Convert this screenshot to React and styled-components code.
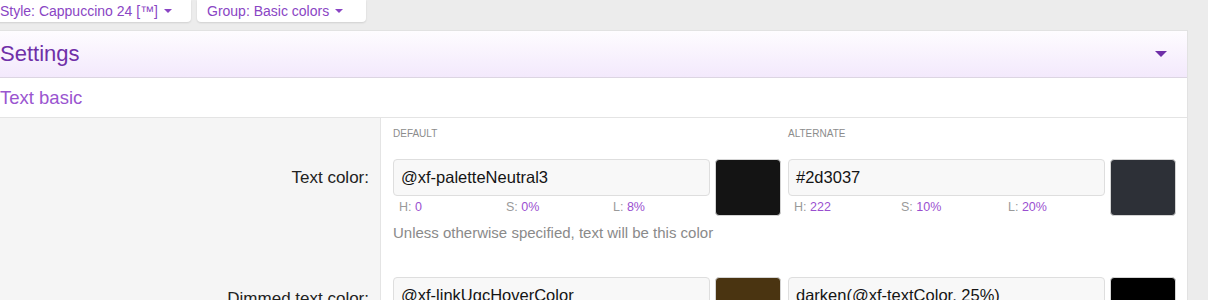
import React from 'react';
import styled, { createGlobalStyle } from 'styled-components';

const GlobalStyle = createGlobalStyle`
  html, body {
    margin: 0;
    padding: 0;
    background: #ececec;
    font-family: "Liberation Sans", Arial, sans-serif;
    overflow: hidden;
  }
`;

const Page = styled.div`
  margin-left: -10px;
  width: 1197px;
`;

const Toolbar = styled.div`
  display: flex;
  gap: 6px;
  height: 22px;
  margin-bottom: 9px;
`;

const MenuButton = styled.button`
  display: flex;
  align-items: center;
  gap: 6px;
  height: 22px;
  padding: 0 14px 0 10px;
  border: none;
  border-radius: 0 0 4px 4px;
  background: #fff;
  box-shadow: 0 1px 2px rgba(0, 0, 0, 0.12);
  color: #8a45c4;
  font-family: inherit;
  font-size: 14px;
  width: ${p => p.$width}px;
`;

const Caret = styled.span`
  width: 0;
  height: 0;
  border-left: ${p => p.$size}px solid transparent;
  border-right: ${p => p.$size}px solid transparent;
  border-top: ${p => p.$size}px solid ${p => p.$color};
`;

const Block = styled.div`
  background: #fff;
  box-shadow: 0 0 0 1px #e2e2e2;
`;

const Header = styled.div`
  display: flex;
  align-items: center;
  justify-content: space-between;
  height: 46px;
  padding: 0 20px 0 10px;
  background: linear-gradient(to bottom, #fefcff, #f3e9fc);
  border-bottom: 1px solid #dcd5e2;
  color: #6f2fa8;
  font-size: 22px;
`;

const SubHeader = styled.div`
  display: flex;
  align-items: center;
  height: 39px;
  padding: 0 10px;
  border-bottom: 1px solid #e4e4e4;
  color: #9a55d0;
  font-size: 18.5px;
`;

const FormRow = styled.div`
  display: grid;
  grid-template-columns: 391px 1fr;
`;

const LabelCell = styled.div`
  background: #f5f5f5;
  border-right: 1px solid #e4e4e4;
  text-align: right;
  padding: ${p => p.$top}px 11px 0 0;
  color: #222;
  font-size: 17px;
`;

const FieldCell = styled.div`
  padding: ${p => p.$top}px 12px ${p => p.$bottom}px 12px;
`;

const Columns = styled.div`
  display: grid;
  grid-template-columns: 387px 387px;
  column-gap: 8px;
`;

const ColumnTitle = styled.div`
  font-size: 10px;
  color: #8c8c8c;
  text-transform: uppercase;
  height: 31px;
`;

const ColorGroup = styled.div`
  display: grid;
  grid-template-columns: 317px 66px;
  column-gap: 5px;
`;

const ValueInput = styled.div`
  height: 37px;
  box-sizing: border-box;
  display: flex;
  align-items: center;
  padding: 0 7px;
  background: #f8f8f8;
  border: 1px solid #dedede;
  border-radius: 4px;
  color: #141414;
  font-size: 16.5px;
`;

const Swatch = styled.div`
  height: 57px;
  border-radius: 4px;
  border: 1px solid #d4d4d4;
  box-sizing: border-box;
  background: ${p => p.$color};
`;

const HslRow = styled.div`
  display: grid;
  grid-template-columns: repeat(3, 107px);
  padding: 4px 6px 0;
  font-size: 12.5px;
  color: #9a9a9a;
`;

const HslValue = styled.span`
  color: #9a4fd0;
`;

const Hint = styled.div`
  margin-top: 8px;
  font-size: 15px;
  color: #8a8a8a;
`;

const ColorField = ({ value, color, hsl }) => (
  <div>
    <ColorGroup>
      <div>
        <ValueInput>{value}</ValueInput>
        {hsl && (
          <HslRow>
            <span>H: <HslValue>{hsl[0]}</HslValue></span>
            <span>S: <HslValue>{hsl[1]}</HslValue></span>
            <span>L: <HslValue>{hsl[2]}</HslValue></span>
          </HslRow>
        )}
      </div>
      <Swatch $color={color} />
    </ColorGroup>
  </div>
);

export default function App() {
  return (
    <Page>
      <GlobalStyle />
      <Toolbar>
        <MenuButton $width={201}>Style: Cappuccino 24 [™] <Caret $size={4} $color="#8a45c4" /></MenuButton>
        <MenuButton $width={169}>Group: Basic colors <Caret $size={4} $color="#8a45c4" /></MenuButton>
      </Toolbar>
      <Block>
        <Header>
          Settings
          <Caret $size={6} $color="#6f2fa8" />
        </Header>
        <SubHeader>Text basic</SubHeader>
        <FormRow>
          <LabelCell $top={50}>Text color:</LabelCell>
          <FieldCell $top={10} $bottom={36}>
            <Columns>
              <ColumnTitle>Default</ColumnTitle>
              <ColumnTitle>Alternate</ColumnTitle>
              <ColorField value="@xf-paletteNeutral3" color="#141414" hsl={['0', '0%', '8%']} />
              <ColorField value="#2d3037" color="#2d3037" hsl={['222', '10%', '20%']} />
            </Columns>
            <Hint>Unless otherwise specified, text will be this color</Hint>
          </FieldCell>
        </FormRow>
        <FormRow>
          <LabelCell $top={12}>Dimmed text color:</LabelCell>
          <FieldCell $top={0} $bottom={20}>
            <Columns>
              <ColorField value="@xf-linkUgcHoverColor" color="#4a3411" hsl={['38', '63%', '18%']} />
              <ColorField value="darken(@xf-textColor, 25%)" color="#000000" hsl={['0', '0%', '0%']} />
            </Columns>
          </FieldCell>
        </FormRow>
      </Block>
    </Page>
  );
}
